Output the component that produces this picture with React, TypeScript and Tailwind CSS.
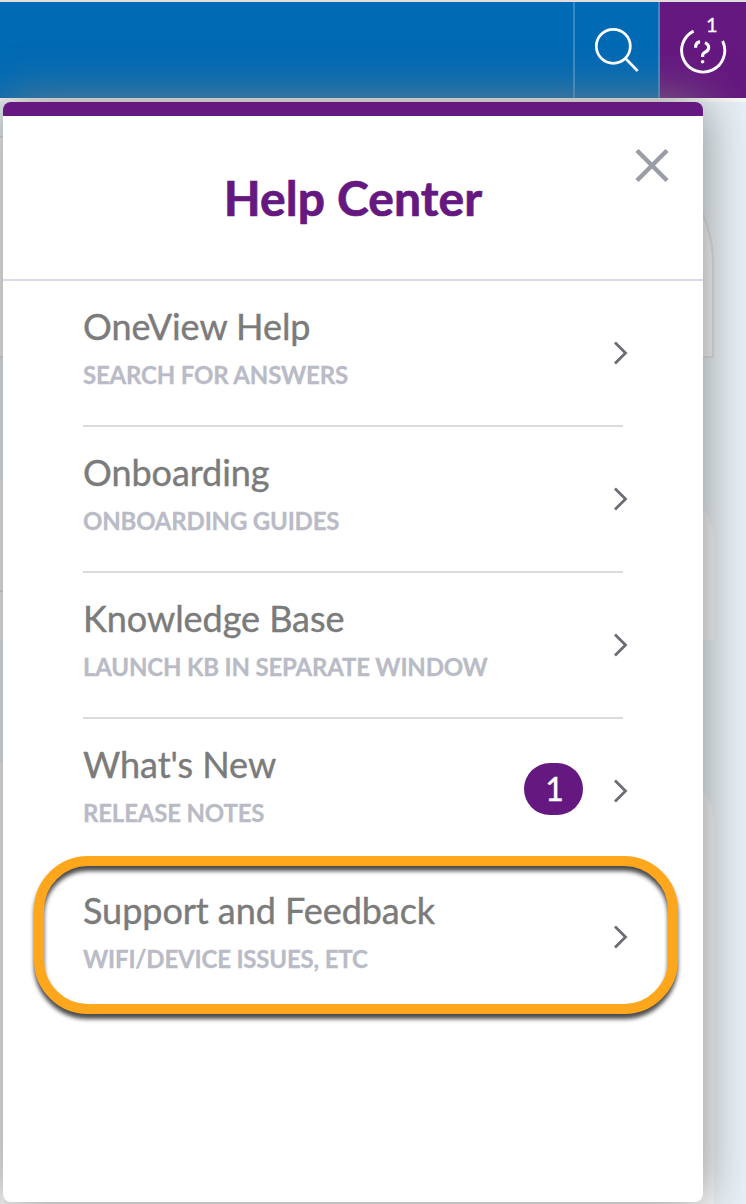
function SearchIcon() {
  return (
    <svg width="46" height="46" viewBox="0 0 46 46" fill="none" stroke="white" strokeWidth="2.7">
      <circle cx="19.3" cy="19.3" r="17" />
      <path d="M31.3 31.3L43.7 44" strokeLinecap="butt" />
    </svg>
  );
}

function HelpIcon() {
  return (
    <svg width="50" height="50" viewBox="0 0 50 50" fill="none" stroke="white" strokeWidth="2.9">
      <path d="M15.6 6.1A21.6 21.6 0 1 0 44.6 16" />
      <path d="M17.6 22.8C17.5 19.6 19.2 17.2 22 16.6M27 17.6C30.5 19.2 31.6 22.4 29.9 25C28.2 27.6 24.6 27.4 24.6 30.6V32" strokeWidth="3.2" />
      <circle cx="24.6" cy="36.8" r="1.8" fill="white" stroke="none" />
    </svg>
  );
}

function CloseIcon() {
  return (
    <svg width="34" height="34" viewBox="0 0 34 34" stroke="#9a9ca6" strokeWidth="4.4">
      <path d="M2 1.5L32 31.5M32 1.5L2 31.5" />
    </svg>
  );
}

function Chevron() {
  return (
    <svg width="14" height="24" viewBox="0 0 14 24" fill="none" stroke="#6b6c76" strokeWidth="2.8">
      <path d="M1 1.5L11.5 12L1 22.5" />
    </svg>
  );
}

const items = [
  { title: "OneView Help", subtitle: "SEARCH FOR ANSWERS" },
  { title: "Onboarding", subtitle: "ONBOARDING GUIDES" },
  { title: "Knowledge Base", subtitle: "LAUNCH KB IN SEPARATE WINDOW" },
  { title: "What's New", subtitle: "RELEASE NOTES", badge: 1 },
  { title: "Support and Feedback", subtitle: "WIFI/DEVICE ISSUES, ETC", highlighted: true },
];

export default function App() {
  return (
    <div className="relative flex h-[1204px] w-[746px] flex-col overflow-hidden bg-[#e8f1f7] font-['Lato',sans-serif]">
      <header className="flex h-[98px] shrink-0 justify-end border-t-2 border-[#dedede] bg-[#006ab4]">
        <button className="flex w-[87px] justify-center border-x-2 border-[#398bc4] pt-[25px]">
          <SearchIcon />
        </button>
        <button className="relative flex w-[86px] justify-center bg-[#65187f] pt-[23px]">
          <HelpIcon />
          <span className="absolute top-[10px] left-[46px] text-[20px] leading-6 text-white [-webkit-text-stroke:0.3px_white]">1</span>
        </button>
      </header>

      <main className="flex w-[714px] flex-1 flex-col">
        <div className="h-1 w-[746px] bg-[#f8f8f8]" />
        <div className="mt-[34px] h-[222px] rounded-tr-[128px] border-2 border-l-0 border-[#dedede] bg-[#f8f8f8]" />
        <div className="mt-[122px] h-40 rounded-tr-[64px] bg-[#f8f8f8] pt-[110px]">
          <div className="h-0.5 w-10 bg-[#dedede]" />
        </div>
        <div className="mt-[122px] flex-1 rounded-tr-[64px] bg-[#f8f8f8]" />
      </main>

      <section className="absolute top-[102px] left-[3px] h-[1100px] w-[700px] rounded-lg border-t-[14px] border-[#65187f] bg-white shadow-[0_0_50px_rgba(128,128,128,0.95)]">
        <div className="relative h-[165px] border-b-2 border-[#d9dbe6] pt-[53px] text-center">
          <h1 className="text-[48px] leading-[58px] font-bold tracking-[0.1px] text-[#65187f] [-webkit-text-stroke:0.7px_#65187f]">Help Center</h1>
          <button className="absolute top-[33px] right-[34px]">
            <CloseIcon />
          </button>
        </div>
        <ul className="mx-20">
          {items.map((item, i) => (
            <li
              key={item.title}
              className={`relative flex h-[146px] justify-between ${i < 3 ? "border-b-2 border-[#dbdbde]" : ""}`}
            >
              <div className="pt-[23px]">
                <h2 className="text-[36px] leading-[44px] tracking-[-0.05px] text-[#7b7b7b] [-webkit-text-stroke:0.4px_#7b7b7b]">{item.title}</h2>
                <p className="mt-[13px] text-[24px] leading-[28px] font-bold tracking-[-0.18px] text-[#b9bbc6] [-webkit-text-stroke:0.3px_#b9bbc6]">
                  {item.subtitle}
                </p>
              </div>
              <div className="-mr-[5px] flex">
                {item.badge && (
                  <span className="mt-11 mr-[31px] flex h-[52px] w-[59px] items-center justify-center rounded-[26px] bg-[#65187f] pl-0.5 text-[32px] text-white [-webkit-text-stroke:0.4px_white]">
                    {item.badge}
                  </span>
                )}
                <div className="mt-[60px]">
                  <Chevron />
                </div>
              </div>
              {item.highlighted && (
                <div className="absolute -top-[9px] -left-[49px] h-[158px] w-[644px] rounded-[54px] border-[10px] border-[#ffa71c] drop-shadow-[0_5px_2px_rgba(0,0,0,0.7)]" />
              )}
            </li>
          ))}
        </ul>
      </section>
    </div>
  );
}
